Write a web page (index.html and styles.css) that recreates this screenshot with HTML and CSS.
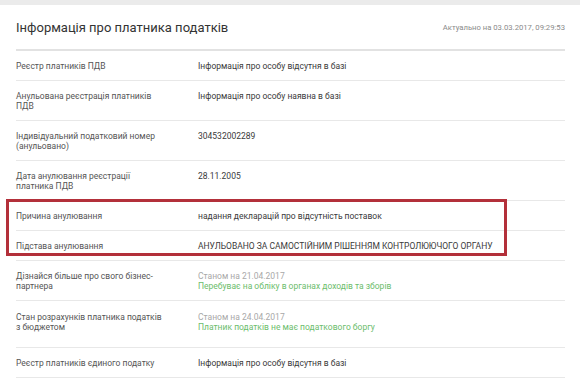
FILE: index.html
```html
<!DOCTYPE html>
<html lang="uk">
<head>
    <meta charset="UTF-8">
    <title>Інформація про платника податків</title>
    <link rel="stylesheet" href="styles.css">
</head>
<body>
    <div class="topbar"></div>

    <div class="card">
        <div class="card-head">
            <h2>Інформація про платника податків</h2>
            <span class="updated">Актуально на 03.03.2017, 09:29:53</span>
        </div>

        <div class="row">
            <div class="label">Реєстр платників ПДВ</div>
            <div class="value">Інформація про особу відсутня в базі</div>
        </div>
        <div class="row">
            <div class="label">Анульована реєстрація платників ПДВ</div>
            <div class="value">Інформація про особу наявна в базі</div>
        </div>
        <div class="row">
            <div class="label">Індивідуальний податковий номер (анульовано)</div>
            <div class="value">304532002289</div>
        </div>
        <div class="row">
            <div class="label">Дата анулювання реєстрації платника ПДВ</div>
            <div class="value">28.11.2005</div>
        </div>

        <div class="marked">
            <div class="row">
                <div class="label">Причина анулювання</div>
                <div class="value">надання декларацій про відсутність поставок</div>
            </div>
            <div class="row">
                <div class="label">Підстава анулювання</div>
                <div class="value">АНУЛЬОВАНО ЗА САМОСТІЙНИМ РІШЕННЯМ КОНТРОЛЮЮЧОГО ОРГАНУ</div>
            </div>
        </div>

        <div class="row">
            <div class="label">Дізнайся більше про свого бізнес-партнера</div>
            <div class="value">
                <div class="muted">Станом на 21.04.2017</div>
                <div class="ok">Перебуває на обліку в органах доходів та зборів</div>
            </div>
        </div>
        <div class="row tall">
            <div class="label">Стан розрахунків платника податків з бюджетом</div>
            <div class="value">
                <div class="muted">Станом на 24.04.2017</div>
                <div class="ok">Платник податків не має податкового боргу</div>
            </div>
        </div>
        <div class="row">
            <div class="label">Реєстр платників єдиного податку</div>
            <div class="value">Інформація про особу відсутня в базі</div>
        </div>
    </div>
</body>
</html>
```

FILE: styles.css
```css
body {
    margin: 0;
    background-color: #fff;
    font-family: Roboto, Arial, sans-serif;
    color: #333;
}
.topbar {
    height: 5px;
    background-color: #ebebeb;
}
.card {
    padding: 0 15px 0 16px;
}
.card-head {
    display: flex;
    justify-content: space-between;
    align-items: center;
    height: 44px;
    border-bottom: 2px solid #e2e2e2;
}
.card-head h2 {
    margin: 0;
    font-size: 13px;
    font-weight: normal;
    color: #333;
}
.updated {
    font-size: 7.7px;
    color: #8a8a8a;
}
.row {
    display: flex;
    padding: 10px 0 9px;
    border-bottom: 1px solid #e8e8e8;
    font-size: 8.5px;
    line-height: 10px;
}
.row.tall {
    padding: 11px 0 15px;
}
.label {
    width: 182px;
    padding-right: 30px;
    box-sizing: border-box;
    color: #555;
}
.value {
    flex: 1;
    color: #3a3a3a;
}
.muted {
    color: #a8a8a8;
}
.ok {
    color: #6cbd6c;
}
.marked {
    position: relative;
}
/* червона рамка поверх двох рядків */
.marked::after {
    content: "";
    position: absolute;
    top: -2px;
    bottom: 5px;
    left: -10px;
    right: 58px;
    border: 3px solid #b3303a;
}
```
